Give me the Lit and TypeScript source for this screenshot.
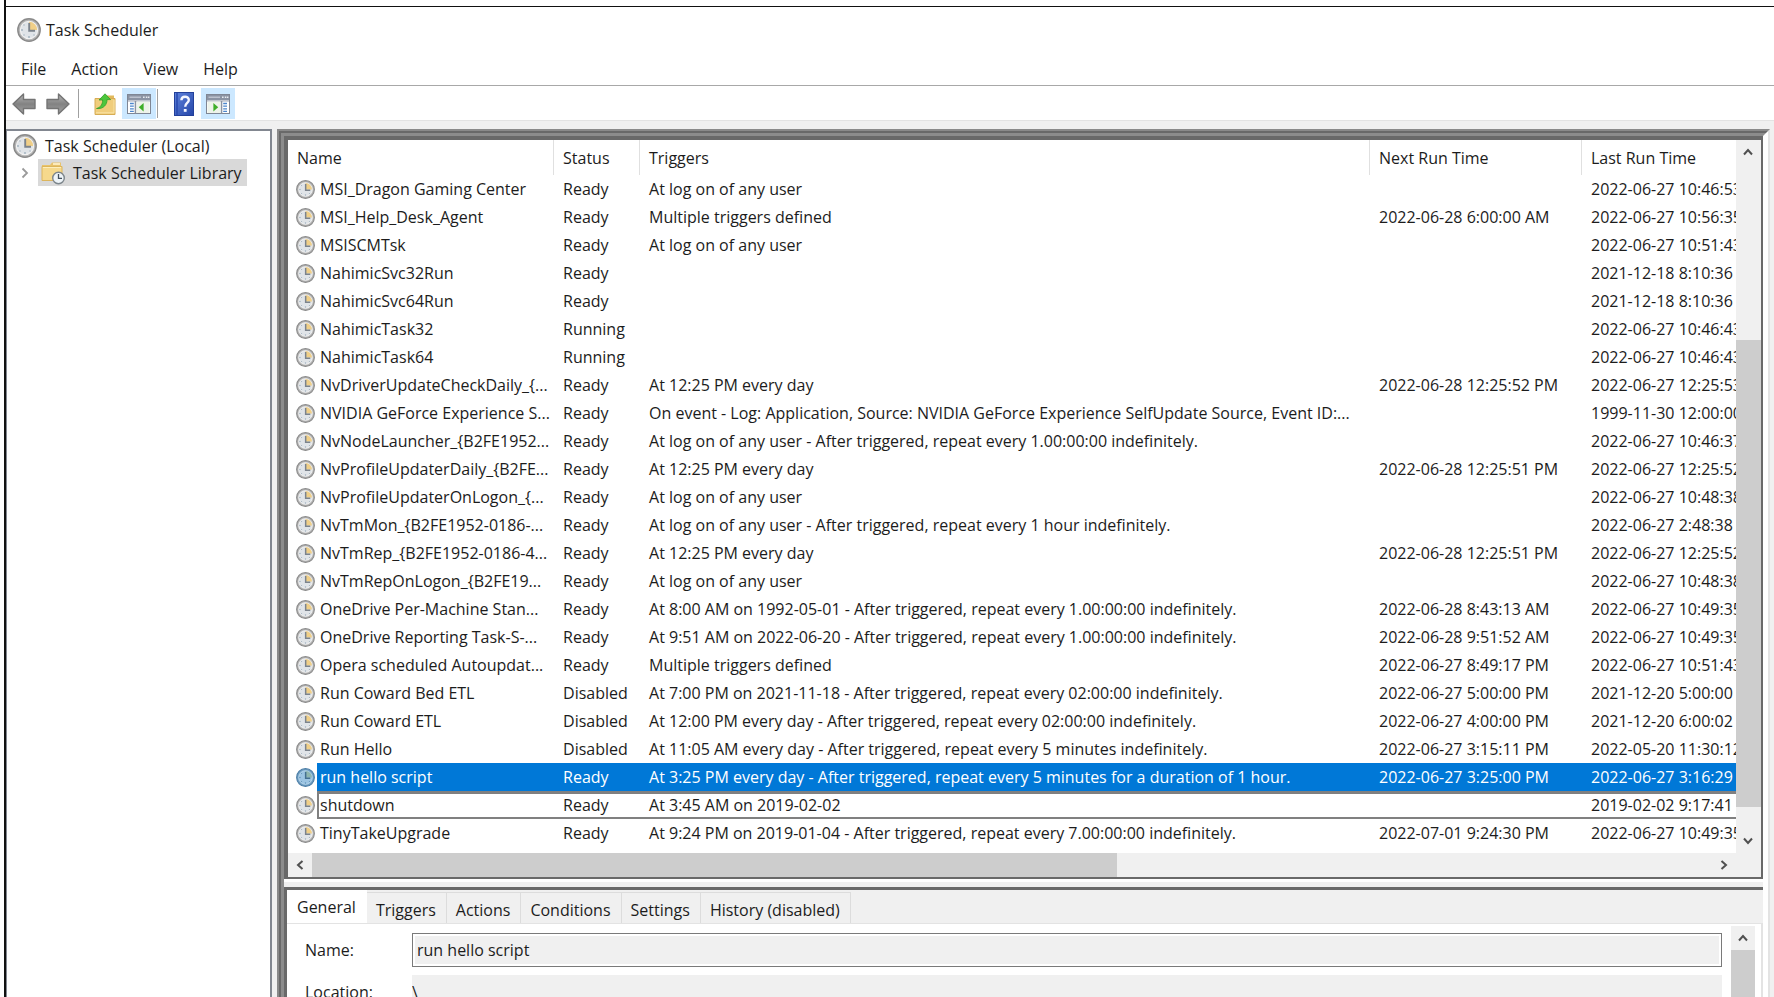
import { LitElement, html, css } from "lit";
import { customElement } from "lit/decorators.js";

const TASKS: string[][] = [
  ["MSI_Dragon Gaming Center", "Ready", "At log on of any user", "", "2022-06-27 10:46:53"],
  ["MSI_Help_Desk_Agent", "Ready", "Multiple triggers defined", "2022-06-28 6:00:00 AM", "2022-06-27 10:56:35"],
  ["MSISCMTsk", "Ready", "At log on of any user", "", "2022-06-27 10:51:43"],
  ["NahimicSvc32Run", "Ready", "", "", "2021-12-18 8:10:36"],
  ["NahimicSvc64Run", "Ready", "", "", "2021-12-18 8:10:36"],
  ["NahimicTask32", "Running", "", "", "2022-06-27 10:46:43"],
  ["NahimicTask64", "Running", "", "", "2022-06-27 10:46:43"],
  ["NvDriverUpdateCheckDaily_{...", "Ready", "At 12:25 PM every day", "2022-06-28 12:25:52 PM", "2022-06-27 12:25:53"],
  ["NVIDIA GeForce Experience S...", "Ready", "On event - Log: Application, Source: NVIDIA GeForce Experience SelfUpdate Source, Event ID:...", "", "1999-11-30 12:00:00"],
  ["NvNodeLauncher_{B2FE1952...", "Ready", "At log on of any user - After triggered, repeat every 1.00:00:00 indefinitely.", "", "2022-06-27 10:46:37"],
  ["NvProfileUpdaterDaily_{B2FE...", "Ready", "At 12:25 PM every day", "2022-06-28 12:25:51 PM", "2022-06-27 12:25:52"],
  ["NvProfileUpdaterOnLogon_{...", "Ready", "At log on of any user", "", "2022-06-27 10:48:38"],
  ["NvTmMon_{B2FE1952-0186-...", "Ready", "At log on of any user - After triggered, repeat every 1 hour indefinitely.", "", "2022-06-27 2:48:38"],
  ["NvTmRep_{B2FE1952-0186-4...", "Ready", "At 12:25 PM every day", "2022-06-28 12:25:51 PM", "2022-06-27 12:25:52"],
  ["NvTmRepOnLogon_{B2FE19...", "Ready", "At log on of any user", "", "2022-06-27 10:48:38"],
  ["OneDrive Per-Machine Stan...", "Ready", "At 8:00 AM on 1992-05-01 - After triggered, repeat every 1.00:00:00 indefinitely.", "2022-06-28 8:43:13 AM", "2022-06-27 10:49:35"],
  ["OneDrive Reporting Task-S-...", "Ready", "At 9:51 AM on 2022-06-20 - After triggered, repeat every 1.00:00:00 indefinitely.", "2022-06-28 9:51:52 AM", "2022-06-27 10:49:35"],
  ["Opera scheduled Autoupdat...", "Ready", "Multiple triggers defined", "2022-06-27 8:49:17 PM", "2022-06-27 10:51:43"],
  ["Run Coward Bed ETL", "Disabled", "At 7:00 PM on 2021-11-18 - After triggered, repeat every 02:00:00 indefinitely.", "2022-06-27 5:00:00 PM", "2021-12-20 5:00:00"],
  ["Run Coward ETL", "Disabled", "At 12:00 PM every day - After triggered, repeat every 02:00:00 indefinitely.", "2022-06-27 4:00:00 PM", "2021-12-20 6:00:02"],
  ["Run Hello", "Disabled", "At 11:05 AM every day - After triggered, repeat every 5 minutes indefinitely.", "2022-06-27 3:15:11 PM", "2022-05-20 11:30:12"],
  ["run hello script", "Ready", "At 3:25 PM every day - After triggered, repeat every 5 minutes for a duration of 1 hour.", "2022-06-27 3:25:00 PM", "2022-06-27 3:16:29"],
  ["shutdown", "Ready", "At 3:45 AM on 2019-02-02", "", "2019-02-02 9:17:41"],
  ["TinyTakeUpgrade", "Ready", "At 9:24 PM on 2019-01-04 - After triggered, repeat every 7.00:00:00 indefinitely.", "2022-07-01 9:24:30 PM", "2022-06-27 10:49:35"],
];
const SELECTED = 21;
const FOCUSED = 22;

const clock = (size: number, tint = false) => html`<svg width=${size} height=${size} viewBox="0 0 24 24" aria-hidden="true">
  <circle cx="12" cy="12" r="11.2" fill=${tint ? "#6f9dc0" : "#b4b4b4"} stroke=${tint ? "#4a7da6" : "#8a8a8a"} stroke-width="1.4"/>
  <circle cx="12" cy="12" r="8.6" fill=${tint ? "#9cc4e2" : "#e0e4e8"} stroke=${tint ? "#b4d4ea" : "#f2f2f2"} stroke-width="1.2"/>
  <path d="M12 12V3.8A8.2 8.2 0 0 1 20.2 12Z" fill=${tint ? "#8fb6ae" : "#f0cf88"}/>
  <path d="M12.2 5V12.8H18" fill="none" stroke=${tint ? "#44708f" : "#7b838c"} stroke-width="1.9"/>
  <g fill=${tint ? "#5d8fb5" : "#9fb0bd"}><circle cx="12" cy="19" r=".9"/><circle cx="5" cy="12" r=".9"/><circle cx="7" cy="7" r=".7"/><circle cx="7" cy="17" r=".7"/><circle cx="17" cy="17" r=".7"/></g>
</svg>`;

const chevron = (d: string) => html`<svg width="10" height="10" viewBox="0 0 10 10" aria-hidden="true"><path d=${d} fill="none" stroke="#505050" stroke-width="2"/></svg>`;
const UP = "M1 7.5L5 3L9 7.5";
const DOWN = "M1 2.5L5 7L9 2.5";
const LEFT = "M7.5 1L3 5L7.5 9";
const RIGHT = "M2.5 1L7 5L2.5 9";

const arrow = (flip: boolean) => html`<svg width="24" height="22" viewBox="0 0 24 22" aria-hidden="true">
  <defs><linearGradient id="ar" x1="0" y1="0" x2="0" y2="1"><stop offset="0" stop-color="#b8b8b8"/><stop offset=".5" stop-color="#828282"/><stop offset="1" stop-color="#a4a4a4"/></linearGradient></defs>
  <path transform=${flip ? "translate(24 0) scale(-1 1)" : ""} d="M1 11L11.5 1V6.5H23V15.5H11.5V21Z" fill="url(#ar)" stroke="#747474" stroke-width="1.4" stroke-linejoin="round"/>
</svg>`;

const pane = (right: boolean) => html`<svg width="24" height="20" viewBox="0 0 24 20" aria-hidden="true">
  <rect x=".5" y=".5" width="23" height="19" fill="#fff" stroke="#7f8694"/>
  <rect x="1" y="1" width="22" height="5.5" fill="#8b93a3"/>
  <path d="M2.5 3.2H14" stroke="#c9ced8" stroke-width="1.2"/>
  <path d="M16 3.2h1.6M18.8 3.2h1.6M21 3.2h1.4" stroke="#e8ebf0" stroke-width="1.6"/>
  <path d="M1 7.2H23" stroke="#b8bdc8"/>
  <g transform=${right ? "translate(24 0) scale(-1 1)" : ""}>
    <path d="M8.5 7V19.5" stroke="#8b93a3" stroke-width="1.6"/>
    <path d="M3 9.5H6.8M3 12.2H6.8M3 14.8H6.8M3 17.3H6.8" stroke="#4d86cc" stroke-width="1.3"/>
    <rect x="9.5" y="7.6" width="13" height="11.4" fill="#eef3ea"/>
    <path d="M16.6 9V17.4L11.8 13.2Z" fill="#3fae2a"/>
  </g>
</svg>`;

const folderUp = html`<svg width="22" height="24" viewBox="0 0 22 24" aria-hidden="true">
  <path d="M11 6L13 3.5H20V9H11Z" fill="#e2b95c"/>
  <path d="M1 6.5H21V22.5H1Z" fill="#f0cd7c" stroke="#d6ac54"/>
  <path d="M2 20.8H20V8" fill="none" stroke="#f9e3a6"/>
  <path d="M2.5 16.5C7 15.5 8.8 11.5 8.6 8H5L11 1.8L16.6 7.6H13C13.2 12.4 9.6 17.4 2.5 16.5Z" fill="#4cc63c" stroke="#2f9e28" stroke-width=".8"/>
</svg>`;

const help = html`<svg width="20" height="24" viewBox="0 0 20 24" aria-hidden="true">
  <defs><linearGradient id="hp" x1="0" y1="0" x2="1" y2="1"><stop offset="0" stop-color="#5f83dc"/><stop offset="1" stop-color="#2445a8"/></linearGradient></defs>
  <rect x=".5" y=".5" width="19" height="23" fill="url(#hp)" stroke="#23409a"/>
  <path d="M3 1V23" stroke="#2a4bb0" stroke-width="1.6"/>
  <path d="M7.4 8.2C7.4 3.6 14.8 3.6 14.8 8C14.8 11 11.2 11 11.2 14.8" fill="none" stroke="#f4f6ff" stroke-width="2.4"/>
  <rect x="9.8" y="17" width="2.8" height="2.8" fill="#f4f6ff"/>
</svg>`;

const library = html`<svg width="24" height="24" viewBox="0 0 24 24" aria-hidden="true">
  <path d="M1 4H9L11 1.5H20V7H1Z" fill="#e9c36c"/>
  <path d="M12 3H19" stroke="#fff3cf" stroke-width="1.6"/>
  <path d="M1 5.5H21V19.5H1Z" fill="#f6d98c" stroke="#dcb55c"/>
  <path d="M2 6.5H20" stroke="#fdeebd"/>
  <circle cx="17.5" cy="17" r="5.8" fill="#eef4f8" stroke="#7d868c" stroke-width="1.4"/>
  <path d="M17.5 13V17.4H21" fill="none" stroke="#44515c" stroke-width="1.3"/>
</svg>`;

@customElement("app-root")
export class AppRoot extends LitElement {
  static styles = css`
    :host { display: block; height: 100vh; overflow: hidden; background: #fff; color: #1c1c1c; font: 16px/24px "Open Sans", "Noto Sans", sans-serif; }
    * { box-sizing: border-box; }
    svg { display: block; flex: none; }
    button { font: inherit; color: inherit; background: none; border: 0; padding: 0; margin: 0; }
    .window { margin-left: 4px; height: 100%; border-left: 2px solid #111; display: flex; flex-direction: column; }
    .title { display: flex; align-items: center; gap: 5px; height: 46px; margin-top: 6px; border-top: 1px solid #111; padding-left: 11px; flex: none; }
    h1 { font: inherit; margin: 0; }
    .menu { display: flex; gap: 25px; height: 34px; padding-left: 15px; align-items: center; border-bottom: 1px solid #a8a8a8; flex: none; }
    .toolbar { display: flex; align-items: center; height: 34px; flex: none; padding: 2px 0 1px 4px; }
    .tool { height: 31px; display: grid; place-items: center; width: 34px; }
    .tool.narrow { width: 28px; margin-right: 6px; }
    .tool.on { background: #cce8ff; }
    .sep { width: 1px; height: 29px; background: #a0a0a0; margin-right: 9px; }
    .sep.mid { margin-left: 1px; }
    .body { flex: 1; min-height: 0; display: flex; gap: 5px; padding-top: 8px; background: #f0f0f0; border-top: 1px solid #e3e3e3; }
    .tree { width: 266px; flex: none; background: #fff; border: 2px solid #828790; border-left-width: 1px; border-bottom: 0; padding-top: 1px; }
    .node { display: flex; align-items: center; height: 27px; gap: 8px; padding-left: 6px; }
    .node.child { gap: 8px; padding-left: 13px; }
    .pick { display: flex; align-items: center; gap: 8px; height: 27px; background: #d9d9d9; padding: 0 5px 0 3px; white-space: nowrap; }
    .frame { flex: 1; min-width: 0; margin-right: 4px; display: flex; flex-direction: column; border: 2px solid; border-color: #8a8a8a #e3e3e3 #e3e3e3 #8a8a8a; border-bottom: 0; }
    .inner { flex: 1; min-height: 0; display: flex; flex-direction: column; border: 2px solid; border-color: #696969 #fff #fff #696969; border-bottom: 0; }
    .core { flex: 1; min-height: 0; display: flex; flex-direction: column; border: 3px solid; border-color: #8c8c8c #fff #fff #8c8c8c; border-bottom: 0; gap: 8px; background: #f0f0f0; }
    .list { flex: none; display: grid; grid-template-columns: minmax(0, 1fr) 25px; background: #f0f0f0; border: 4px solid #696969; border-width: 4px 2px 2px 4px; box-shadow: 0 3px #fff; }
    .view { overflow: hidden; background: #fff; padding-bottom: 6px; }
    table { width: 100%; table-layout: fixed; border-collapse: separate; border-spacing: 0; }
    th, td { padding: 0 0 0 9px; text-align: left; font-weight: 400; white-space: nowrap; overflow: hidden; }
    th { height: 35px; border-right: 1px solid #e0e0e0; }
    th:last-child { border-right: 0; }
    td { height: 28px; }
    td.icon { padding-left: 8px; }
    td.name { padding-left: 3px; }
    .c-icon { width: 29px; } .c-name { width: 237px; } .c-status { width: 86px; } .c-next { width: 212px; } .c-last { width: 154px; }
    tr.sel td:not(.icon) { background: #0078d7; color: #fff; }
    tr.foc td:not(.icon) { box-shadow: inset 0 3px #808080, inset 0 -2px #808080; }
    tr.foc td.name { box-shadow: inset 0 3px #808080, inset 0 -2px #808080, inset 2px 0 #808080; }
    .vbar { display: flex; flex-direction: column; background: #f0f0f0; }
    .vbar button, .hbar button { display: grid; place-items: center; width: 24px; height: 24px; flex: none; }
    .track { flex: 1; display: flex; flex-direction: column; min-height: 0; }
    .before { flex: 176; } .thumb { background: #cdcdcd; flex: 467; } .after { flex: 22; }
    .hbar { display: flex; height: 24px; grid-column: 1; background: #f0f0f0; }
    .hbar .thumb { flex: 805; } .hbar .after { flex: 595; }
    .details { flex: 1; min-height: 0; display: flex; flex-direction: column; border: 3px solid #696969; border-width: 3px 0 0 3px; overflow: hidden; background: #f0f0f0; }
    .tabs { display: flex; align-items: flex-end; height: 34px; flex: none; border-bottom: 1px solid #e3e3e3; }
    .tab { height: 31px; padding: 4px 10px 0 9px; border: 1px solid #dcdcdc; border-width: 1px 1px 0 0; white-space: nowrap; }
    .tab.on { height: 34px; background: #fff; border-color: #fff; padding: 0 10px; }
    .page { flex: 1; min-height: 0; background: #fff; display: flex; padding: 2px 6px 0 18px; border-right: 2px solid #e3e3e3; }
    .form { flex: 1; min-width: 0; display: grid; grid-template-columns: 107px minmax(0, 1fr); grid-auto-rows: 34px; row-gap: 8px; padding-top: 7px; margin-right: 9px; align-items: center; }
    .page .vbar { width: 24px; }
    input { font: inherit; color: inherit; height: 34px; width: 100%; min-width: 0; margin: 0; padding: 0 4px; background: #f0f0f0; border: 1px solid #7a7a7a; box-shadow: inset 0 0 0 2px #fff; border-radius: 0; outline: 0; }
    input.flat { border: 0; box-shadow: none; padding: 0; }
  `;

  render() {
    return html`<div class="window">
      <header class="title">${clock(24)}<h1>Task Scheduler</h1></header>
      <nav class="menu"><button>File</button><button>Action</button><button>View</button><button>Help</button></nav>
      <div class="toolbar">
        <button class="tool narrow" aria-label="Back">${arrow(false)}</button>
        <button class="tool narrow" aria-label="Forward">${arrow(true)}</button>
        <span class="sep"></span>
        <button class="tool" aria-label="Up one level">${folderUp}</button>
        <button class="tool on" aria-label="Show or hide console tree">${pane(false)}</button>
        <span class="sep mid"></span>
        <button class="tool" aria-label="Help">${help}</button>
        <button class="tool on" aria-label="Show or hide action pane">${pane(true)}</button>
      </div>
      <div class="body">
        <aside class="tree">
          <div class="node">${clock(24)}<span>Task Scheduler (Local)</span></div>
          <div class="node child">
            <svg width="10" height="12" viewBox="0 0 10 12" aria-hidden="true"><path d="M2.5 1.5L7 6L2.5 10.5" fill="none" stroke="#9a9a9a" stroke-width="1.8"/></svg>
            <button class="pick">${library}<span>Task Scheduler Library</span></button>
          </div>
        </aside>
        <main class="frame"><div class="inner"><div class="core">
          <section class="list">
            <div class="view"><table>
              <colgroup><col class="c-icon"><col class="c-name"><col class="c-status"><col><col class="c-next"><col class="c-last"></colgroup>
              <thead><tr><th colspan="2">Name</th><th>Status</th><th>Triggers</th><th>Next Run Time</th><th>Last Run Time</th></tr></thead>
              <tbody>${TASKS.map((t, i) => html`<tr class=${i === SELECTED ? "sel" : i === FOCUSED ? "foc" : ""}>
                <td class="icon">${clock(19, i === SELECTED)}</td><td class="name">${t[0]}</td><td>${t[1]}</td><td>${t[2]}</td><td>${t[3]}</td><td>${t[4]}</td></tr>`)}</tbody>
            </table></div>
            <div class="vbar"><button aria-label="Scroll up">${chevron(UP)}</button><div class="track"><div class="before"></div><div class="thumb"></div><div class="after"></div></div><button aria-label="Scroll down">${chevron(DOWN)}</button></div>
            <div class="hbar"><button aria-label="Scroll left">${chevron(LEFT)}</button><div class="thumb"></div><div class="after"></div><button aria-label="Scroll right">${chevron(RIGHT)}</button></div>
          </section>
          <section class="details">
            <div class="tabs" role="tablist">${["General", "Triggers", "Actions", "Conditions", "Settings", "History (disabled)"].map((t, i) => html`<button role="tab" aria-selected=${i === 0 ? "true" : "false"} class=${i ? "tab" : "tab on"}>${t}</button>`)}</div>
            <div class="page">
              <div class="form">
                <label for="name">Name:</label><input id="name" readonly .value=${"run hello script"}>
                <label for="loc">Location:</label><input id="loc" class="flat" readonly .value=${"\\"}>
              </div>
              <div class="vbar"><button aria-label="Scroll details up">${chevron(UP)}</button><div class="thumb"></div></div>
            </div>
          </section>
        </div></div></main>
      </div>
    </div>`;
  }
}
